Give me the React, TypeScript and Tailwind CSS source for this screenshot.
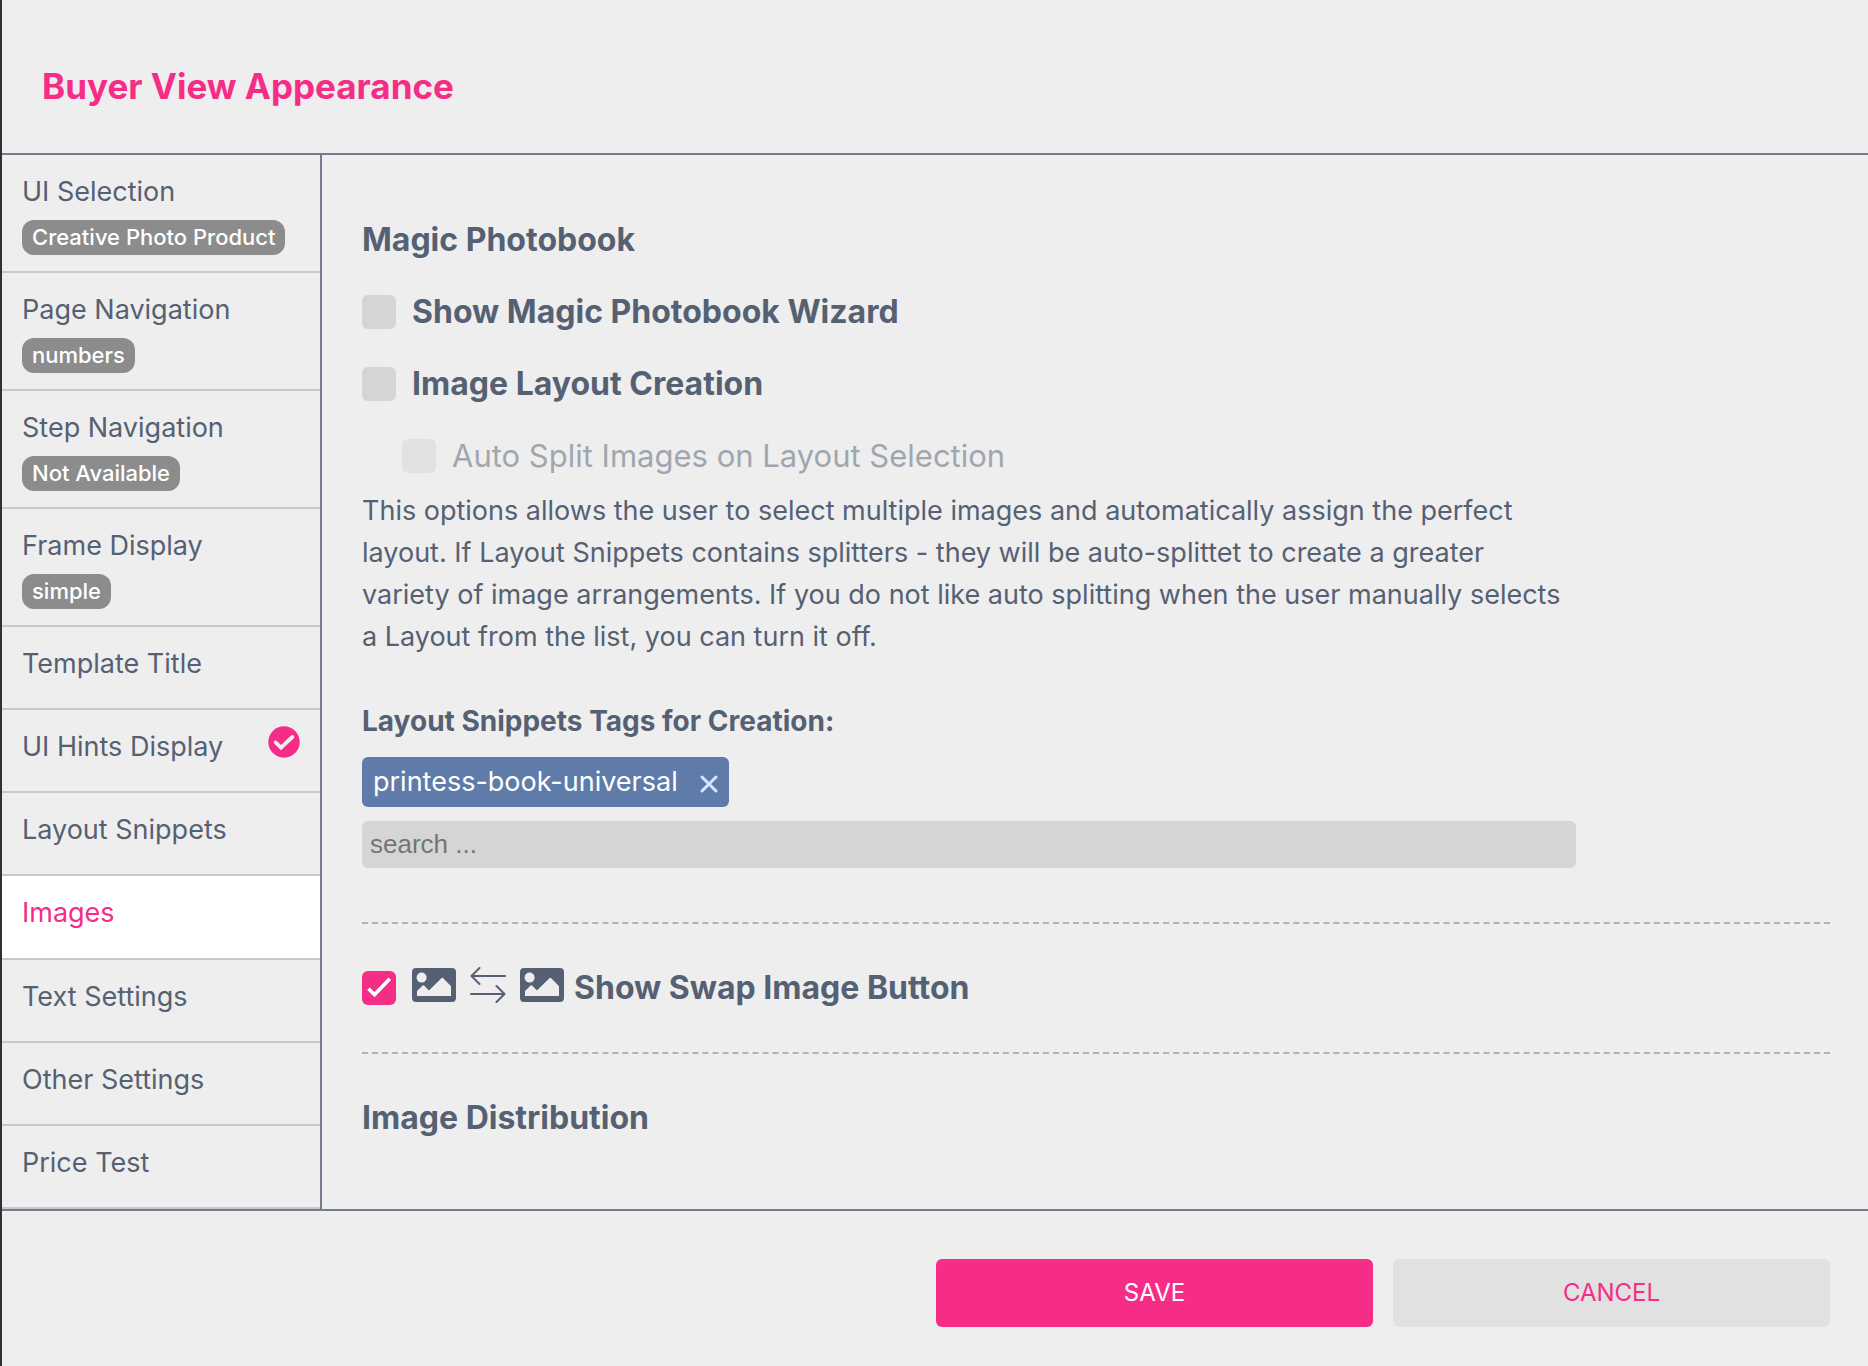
import React, { useState } from 'react';

interface NavEntry {
    id: string;
    label: string;
    tag?: string;
    checked?: boolean;
}

const navEntries: NavEntry[] = [
    { id: 'ui', label: 'UI Selection', tag: 'Creative Photo Product' },
    { id: 'page', label: 'Page Navigation', tag: 'numbers' },
    { id: 'step', label: 'Step Navigation', tag: 'Not Available' },
    { id: 'frame', label: 'Frame Display', tag: 'simple' },
    { id: 'title', label: 'Template Title' },
    { id: 'hints', label: 'UI Hints Display', checked: true },
    { id: 'snippets', label: 'Layout Snippets' },
    { id: 'images', label: 'Images' },
    { id: 'text', label: 'Text Settings' },
    { id: 'other', label: 'Other Settings' },
    { id: 'price', label: 'Price Test' },
];

const CheckCircle = () => (
    <svg viewBox="0 0 32 32" className="size-8 shrink-0" aria-hidden="true">
        <circle cx="16" cy="16" r="15.7" fill="#f52d87" />
        <path d="M7.6 16.4l5.4 5.2L24.4 11" fill="none" stroke="#eee" strokeWidth="3.8" strokeLinecap="round" />
    </svg>
);

const ImageIcon = () => (
    <svg viewBox="0 0 44 34" className="h-[34px] w-11 shrink-0" aria-hidden="true">
        <path
            fill="currentColor"
            fillRule="evenodd"
            d="M4 0h36a4 4 0 0 1 4 4v26a4 4 0 0 1-4 4H4a4 4 0 0 1-4-4V4a4 4 0 0 1 4-4zM9.6 4.6a5 5 0 1 0 0 10 5 5 0 0 0 0-10zM5 28h34V18.2l-8-8.1q-.7-.7-1.400 0L17 22.500l-5-5q-.7-.7-1.400 0L5 23z"
        />
    </svg>
);

const SwapIcon = () => (
    <svg viewBox="0 0 36 36" className="size-9 shrink-0" aria-hidden="true">
        <path
            d="M35 9H1.5M9.5 1l-8 8 8 8M1 27h33.5M26.5 19l8 8-8 8"
            fill="none"
            stroke="currentColor"
            strokeWidth="2"
            strokeLinecap="round"
            strokeLinejoin="round"
        />
    </svg>
);

interface CheckboxProps {
    id: string;
    label: string;
    defaultChecked?: boolean;
    disabled?: boolean;
    children?: React.ReactNode;
}

const Checkbox: React.FC<CheckboxProps> = ({ id, label, defaultChecked, disabled, children }) => (
    <div className={`flex items-center h-9 ${disabled ? 'ml-10 opacity-50 text-[31px]' : 'font-bold text-[32px]'}`}>
        <span className="relative flex shrink-0">
            <input
                id={id}
                type="checkbox"
                defaultChecked={defaultChecked}
                disabled={disabled}
                className="peer size-[34px] appearance-none rounded-md bg-[#d5d5d5] checked:bg-[#f52d87]"
            />
            <svg viewBox="0 0 34 34" className="absolute inset-0 hidden pointer-events-none peer-checked:block" aria-hidden="true">
                <path d="M6.500 17.800l6 5.900L27.800 7.800" fill="none" stroke="#fff" strokeWidth="3.6" />
            </svg>
        </span>
        <label htmlFor={id} className="flex items-center gap-2.5 pl-4 leading-9">
            {children}
            {label}
        </label>
    </div>
);

export default function App() {
    const [active, setActive] = useState('images');
    const [tags, setTags] = useState(['printess-book-universal']);

    return (
        <div className="flex flex-col min-h-screen bg-[#eee] border-l-2 border-[#303030] text-[#556173] font-['Inter',sans-serif]">
            <header className="border-b-2 border-[#737d8d] px-10 pt-16 pb-[45px]">
                <h1 className="text-[35px] leading-[44px] font-bold text-[#f52d87]">Buyer View Appearance</h1>
            </header>

            <div className="flex flex-1">
                <nav className="flex flex-col w-80 shrink-0 border-r-2 border-[#737d8d]">
                    {navEntries.map(({ id, label, tag, checked }) => (
                        <button
                            key={id}
                            onClick={() => setActive(id)}
                            className={`flex items-start justify-between px-5 pt-4 text-left border-b-2 border-[#c6c8ce] ${tag ? 'h-[118px]' : 'flex-1'} ${active === id ? 'bg-white text-[#f52d87]' : ''}`}
                        >
                            <span className="flex flex-col items-start gap-3 pt-1">
                                <span className="text-[27px] leading-[33px]">{label}</span>
                                {tag && (
                                    <span className="rounded-xl bg-[#8c8c8c] px-[10px] text-[22px] leading-[35px] font-medium text-white whitespace-nowrap">{tag}</span>
                                )}
                            </span>
                            {checked && <CheckCircle />}
                        </button>
                    ))}
                </nav>

                <main className="flex-1 pl-10 pr-[38px] pt-[67px]">
                    <h2 className="text-[32px] leading-9 font-bold">Magic Photobook</h2>
                    <div className="flex flex-col gap-9 mt-9">
                        <Checkbox id="wizard" label="Show Magic Photobook Wizard" />
                        <Checkbox id="creation" label="Image Layout Creation" />
                        <Checkbox id="split" label="Auto Split Images on Layout Selection" disabled />
                    </div>
                    <p className="mt-4 max-w-[1214px] text-[27px] leading-[42px]">
                        This options allows the user to select multiple images and automatically assign the perfect layout. If Layout Snippets contains splitters - they will be auto-splittet to create a greater variety of image arrangements. If you do not like auto splitting when the user manually selects a Layout from the list, you can turn it off.
                    </p>

                    <label htmlFor="snippet-tags" className="block mt-[47px] text-[28px] leading-8 font-bold">
                        Layout Snippets Tags for Creation:
                    </label>
                    <div className="flex gap-2 mt-5">
                        {tags.map((tag) => (
                            <span key={tag} className="flex items-center gap-[22px] h-[50px] rounded-md bg-[#5e7ba9] px-[11px] text-[27px] text-white">
                                {tag}
                                <button className="mt-1" aria-label={`Remove ${tag}`} onClick={() => setTags(tags.filter((t) => t !== tag))}>
                                    <svg viewBox="0 0 18 18" className="size-[18px]" aria-hidden="true">
                                        <path d="M2 2l14 14M16 2L2 16" stroke="#d6e4ff" strokeWidth="3" strokeLinecap="round" />
                                    </svg>
                                </button>
                            </span>
                        ))}
                    </div>
                    <input
                        id="snippet-tags"
                        type="text"
                        placeholder="search ..."
                        className="block w-full max-w-[1214px] h-[47px] mt-[14px] px-2 rounded-md bg-[#d5d5d5] text-[26px] font-['Liberation_Sans',sans-serif] placeholder:text-[#757575] outline-none"
                    />

                    <hr className="mt-[54px] mb-[46px] border-t-2 border-dashed border-[#b0b4bc]" />
                    <Checkbox id="swap" label="Show Swap Image Button" defaultChecked>
                        <span className="flex items-center gap-3.5 pb-1.5">
                            <ImageIcon />
                            <SwapIcon />
                            <ImageIcon />
                        </span>
                    </Checkbox>
                    <hr className="my-[46px] border-t-2 border-dashed border-[#b0b4bc]" />
                    <h2 className="text-[32px] leading-9 font-bold">Image Distribution</h2>
                </main>
            </div>

            <footer className="flex justify-end gap-5 border-t-2 border-[#737d8d] pt-12 pb-[39px] pr-[38px]">
                <button className="h-[68px] w-[437px] rounded-md bg-[#f52d87] text-[24px] text-white">SAVE</button>
                <button className="h-[68px] w-[437px] rounded-md bg-[#e1e1e1] text-[24px] text-[#f52d87]">CANCEL</button>
            </footer>
        </div>
    );
}
